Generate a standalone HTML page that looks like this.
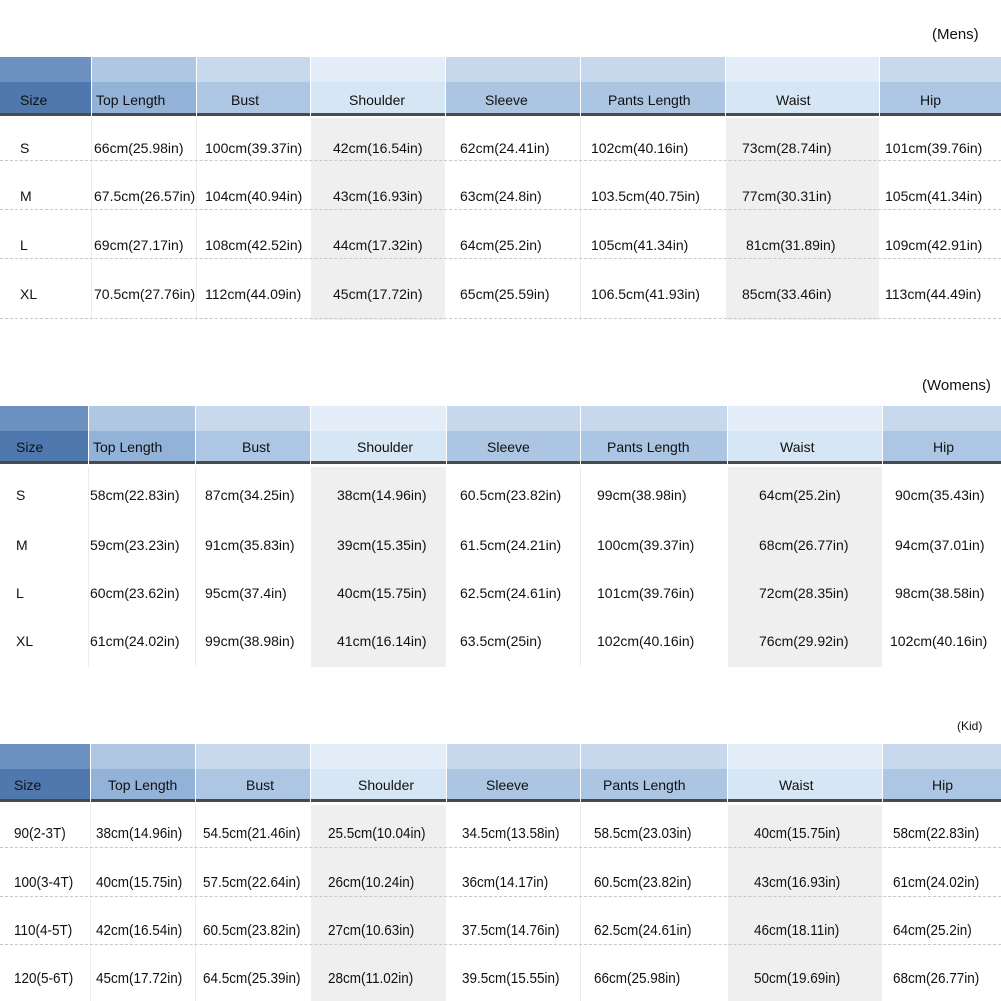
<!DOCTYPE html>
<html><head><meta charset="utf-8"><style>
*{margin:0;padding:0;box-sizing:border-box}
body{width:1001px;height:1001px;background:#fff;position:relative;overflow:hidden;font-family:"Liberation Sans",sans-serif;color:#111}
.h{position:absolute;border-bottom:3px solid #4a4a4a}
.g{position:absolute;background:#efefef}
.v{position:absolute;width:1px;background:#ececec}
.d{position:absolute;left:0;width:1001px;border-top:1px dashed #c8c8c8}
.t{position:absolute;font-size:14px;line-height:18px;white-space:nowrap}
.n{font-size:15px;transform:scaleX(0.9);transform-origin:left center}
.c1{background:linear-gradient(#6d91c0 0,#6d91c0 45%,#4f78ae 45%)}
.c2{background:linear-gradient(#b0c7e3 0,#b0c7e3 45%,#93b2d8 45%)}
.c3{background:linear-gradient(#c8d9ee 0,#c8d9ee 45%,#adc6e4 45%)}
.c4{background:linear-gradient(#e4eef9 0,#e4eef9 45%,#d7e6f5 45%)}
.c5{background:linear-gradient(#c7d8ec 0,#c7d8ec 45%,#abc5e3 45%)}
</style></head><body>

<div class="t" style="left:932px;top:26px;font-size:15px">(Mens)</div>
<div class="t" style="left:922px;top:377px;font-size:15px">(Womens)</div>
<div class="t" style="left:957px;top:717px;font-size:12px">(Kid)</div>

<!-- Table 1 -->
<div class="h c1" style="left:0;top:57px;width:91px;height:59px"></div>
<div class="h c2" style="left:92px;top:57px;width:104px;height:59px"></div>
<div class="h c3" style="left:197px;top:57px;width:113px;height:59px"></div>
<div class="h c4" style="left:311px;top:57px;width:134px;height:59px"></div>
<div class="h c5" style="left:446px;top:57px;width:134px;height:59px"></div>
<div class="h c5" style="left:581px;top:57px;width:144px;height:59px"></div>
<div class="h c4" style="left:726px;top:57px;width:153px;height:59px"></div>
<div class="h c3" style="left:880px;top:57px;width:121px;height:59px"></div>
<div class="g" style="left:311px;top:118px;width:134px;height:202px"></div>
<div class="g" style="left:726px;top:118px;width:153px;height:202px"></div>
<div class="v" style="left:91px;top:118px;height:202px"></div><div class="v" style="left:196px;top:118px;height:202px"></div><div class="v" style="left:580px;top:118px;height:202px"></div>
<div class="d" style="top:160px"></div><div class="d" style="top:209px"></div><div class="d" style="top:258px"></div><div class="d" style="top:318px"></div>
<div class="t" style="left:20px;top:91px">Size</div><div class="t" style="left:96px;top:91px">Top Length</div><div class="t" style="left:231px;top:91px">Bust</div><div class="t" style="left:349px;top:91px">Shoulder</div><div class="t" style="left:485px;top:91px">Sleeve</div><div class="t" style="left:608px;top:91px">Pants Length</div><div class="t" style="left:776px;top:91px">Waist</div><div class="t" style="left:920px;top:91px">Hip</div>
<div class="t" style="left:20px;top:139px">S</div><div class="t" style="left:94px;top:139px">66cm(25.98in)</div><div class="t" style="left:205px;top:139px">100cm(39.37in)</div><div class="t" style="left:333px;top:139px">42cm(16.54in)</div><div class="t" style="left:460px;top:139px">62cm(24.41in)</div><div class="t" style="left:591px;top:139px">102cm(40.16in)</div><div class="t" style="left:742px;top:139px">73cm(28.74in)</div><div class="t" style="left:885px;top:139px">101cm(39.76in)</div>
<div class="t" style="left:20px;top:187px">M</div><div class="t" style="left:94px;top:187px">67.5cm(26.57in)</div><div class="t" style="left:205px;top:187px">104cm(40.94in)</div><div class="t" style="left:333px;top:187px">43cm(16.93in)</div><div class="t" style="left:460px;top:187px">63cm(24.8in)</div><div class="t" style="left:591px;top:187px">103.5cm(40.75in)</div><div class="t" style="left:742px;top:187px">77cm(30.31in)</div><div class="t" style="left:885px;top:187px">105cm(41.34in)</div>
<div class="t" style="left:20px;top:236px">L</div><div class="t" style="left:94px;top:236px">69cm(27.17in)</div><div class="t" style="left:205px;top:236px">108cm(42.52in)</div><div class="t" style="left:333px;top:236px">44cm(17.32in)</div><div class="t" style="left:460px;top:236px">64cm(25.2in)</div><div class="t" style="left:591px;top:236px">105cm(41.34in)</div><div class="t" style="left:746px;top:236px">81cm(31.89in)</div><div class="t" style="left:885px;top:236px">109cm(42.91in)</div>
<div class="t" style="left:20px;top:285px">XL</div><div class="t" style="left:94px;top:285px">70.5cm(27.76in)</div><div class="t" style="left:205px;top:285px">112cm(44.09in)</div><div class="t" style="left:333px;top:285px">45cm(17.72in)</div><div class="t" style="left:460px;top:285px">65cm(25.59in)</div><div class="t" style="left:591px;top:285px">106.5cm(41.93in)</div><div class="t" style="left:742px;top:285px">85cm(33.46in)</div><div class="t" style="left:885px;top:285px">113cm(44.49in)</div>

<!-- Table 2 -->
<div class="h c1" style="left:0;top:406px;width:88px;height:58px"></div>
<div class="h c2" style="left:89px;top:406px;width:106px;height:58px"></div>
<div class="h c3" style="left:196px;top:406px;width:114px;height:58px"></div>
<div class="h c4" style="left:311px;top:406px;width:135px;height:58px"></div>
<div class="h c5" style="left:447px;top:406px;width:133px;height:58px"></div>
<div class="h c5" style="left:581px;top:406px;width:146px;height:58px"></div>
<div class="h c4" style="left:728px;top:406px;width:154px;height:58px"></div>
<div class="h c3" style="left:883px;top:406px;width:118px;height:58px"></div>
<div class="g" style="left:311px;top:467px;width:135px;height:200px"></div>
<div class="g" style="left:728px;top:467px;width:154px;height:200px"></div>
<div class="v" style="left:88px;top:467px;height:200px"></div><div class="v" style="left:195px;top:467px;height:200px"></div><div class="v" style="left:580px;top:467px;height:200px"></div>
<div class="t" style="left:16px;top:438px">Size</div><div class="t" style="left:93px;top:438px">Top Length</div><div class="t" style="left:242px;top:438px">Bust</div><div class="t" style="left:357px;top:438px">Shoulder</div><div class="t" style="left:487px;top:438px">Sleeve</div><div class="t" style="left:607px;top:438px">Pants Length</div><div class="t" style="left:780px;top:438px">Waist</div><div class="t" style="left:933px;top:438px">Hip</div>
<div class="t" style="left:16px;top:486px">S</div><div class="t" style="left:90px;top:486px">58cm(22.83in)</div><div class="t" style="left:205px;top:486px">87cm(34.25in)</div><div class="t" style="left:337px;top:486px">38cm(14.96in)</div><div class="t" style="left:460px;top:486px">60.5cm(23.82in)</div><div class="t" style="left:597px;top:486px">99cm(38.98in)</div><div class="t" style="left:759px;top:486px">64cm(25.2in)</div><div class="t" style="left:895px;top:486px">90cm(35.43in)</div>
<div class="t" style="left:16px;top:536px">M</div><div class="t" style="left:90px;top:536px">59cm(23.23in)</div><div class="t" style="left:205px;top:536px">91cm(35.83in)</div><div class="t" style="left:337px;top:536px">39cm(15.35in)</div><div class="t" style="left:460px;top:536px">61.5cm(24.21in)</div><div class="t" style="left:597px;top:536px">100cm(39.37in)</div><div class="t" style="left:759px;top:536px">68cm(26.77in)</div><div class="t" style="left:895px;top:536px">94cm(37.01in)</div>
<div class="t" style="left:16px;top:584px">L</div><div class="t" style="left:90px;top:584px">60cm(23.62in)</div><div class="t" style="left:205px;top:584px">95cm(37.4in)</div><div class="t" style="left:337px;top:584px">40cm(15.75in)</div><div class="t" style="left:460px;top:584px">62.5cm(24.61in)</div><div class="t" style="left:597px;top:584px">101cm(39.76in)</div><div class="t" style="left:759px;top:584px">72cm(28.35in)</div><div class="t" style="left:895px;top:584px">98cm(38.58in)</div>
<div class="t" style="left:16px;top:632px">XL</div><div class="t" style="left:90px;top:632px">61cm(24.02in)</div><div class="t" style="left:205px;top:632px">99cm(38.98in)</div><div class="t" style="left:337px;top:632px">41cm(16.14in)</div><div class="t" style="left:460px;top:632px">63.5cm(25in)</div><div class="t" style="left:597px;top:632px">102cm(40.16in)</div><div class="t" style="left:759px;top:632px">76cm(29.92in)</div><div class="t" style="left:890px;top:632px">102cm(40.16in)</div>

<!-- Table 3 -->
<div class="h c1" style="left:0;top:744px;width:90px;height:58px"></div>
<div class="h c2" style="left:91px;top:744px;width:104px;height:58px"></div>
<div class="h c3" style="left:196px;top:744px;width:114px;height:58px"></div>
<div class="h c4" style="left:311px;top:744px;width:135px;height:58px"></div>
<div class="h c5" style="left:447px;top:744px;width:133px;height:58px"></div>
<div class="h c5" style="left:581px;top:744px;width:146px;height:58px"></div>
<div class="h c4" style="left:728px;top:744px;width:154px;height:58px"></div>
<div class="h c3" style="left:883px;top:744px;width:118px;height:58px"></div>
<div class="g" style="left:311px;top:805px;width:135px;height:196px"></div>
<div class="g" style="left:728px;top:805px;width:154px;height:196px"></div>
<div class="v" style="left:90px;top:805px;height:196px"></div><div class="v" style="left:195px;top:805px;height:196px"></div><div class="v" style="left:580px;top:805px;height:196px"></div>
<div class="d" style="top:847px"></div><div class="d" style="top:896px"></div><div class="d" style="top:944px"></div>
<div class="t" style="left:14px;top:776px">Size</div><div class="t" style="left:108px;top:776px">Top Length</div><div class="t" style="left:246px;top:776px">Bust</div><div class="t" style="left:358px;top:776px">Shoulder</div><div class="t" style="left:486px;top:776px">Sleeve</div><div class="t" style="left:603px;top:776px">Pants Length</div><div class="t" style="left:779px;top:776px">Waist</div><div class="t" style="left:932px;top:776px">Hip</div>
<div class="t n" style="left:14px;top:825px">90(2-3T)</div><div class="t n" style="left:96px;top:825px">38cm(14.96in)</div><div class="t n" style="left:203px;top:825px">54.5cm(21.46in)</div><div class="t n" style="left:328px;top:825px">25.5cm(10.04in)</div><div class="t n" style="left:462px;top:825px">34.5cm(13.58in)</div><div class="t n" style="left:594px;top:825px">58.5cm(23.03in)</div><div class="t n" style="left:754px;top:825px">40cm(15.75in)</div><div class="t n" style="left:893px;top:825px">58cm(22.83in)</div>
<div class="t n" style="left:14px;top:874px">100(3-4T)</div><div class="t n" style="left:96px;top:874px">40cm(15.75in)</div><div class="t n" style="left:203px;top:874px">57.5cm(22.64in)</div><div class="t n" style="left:328px;top:874px">26cm(10.24in)</div><div class="t n" style="left:462px;top:874px">36cm(14.17in)</div><div class="t n" style="left:594px;top:874px">60.5cm(23.82in)</div><div class="t n" style="left:754px;top:874px">43cm(16.93in)</div><div class="t n" style="left:893px;top:874px">61cm(24.02in)</div>
<div class="t n" style="left:14px;top:922px">110(4-5T)</div><div class="t n" style="left:96px;top:922px">42cm(16.54in)</div><div class="t n" style="left:203px;top:922px">60.5cm(23.82in)</div><div class="t n" style="left:328px;top:922px">27cm(10.63in)</div><div class="t n" style="left:462px;top:922px">37.5cm(14.76in)</div><div class="t n" style="left:594px;top:922px">62.5cm(24.61in)</div><div class="t n" style="left:754px;top:922px">46cm(18.11in)</div><div class="t n" style="left:893px;top:922px">64cm(25.2in)</div>
<div class="t n" style="left:14px;top:970px">120(5-6T)</div><div class="t n" style="left:96px;top:970px">45cm(17.72in)</div><div class="t n" style="left:203px;top:970px">64.5cm(25.39in)</div><div class="t n" style="left:328px;top:970px">28cm(11.02in)</div><div class="t n" style="left:462px;top:970px">39.5cm(15.55in)</div><div class="t n" style="left:594px;top:970px">66cm(25.98in)</div><div class="t n" style="left:754px;top:970px">50cm(19.69in)</div><div class="t n" style="left:893px;top:970px">68cm(26.77in)</div>

</body></html>
